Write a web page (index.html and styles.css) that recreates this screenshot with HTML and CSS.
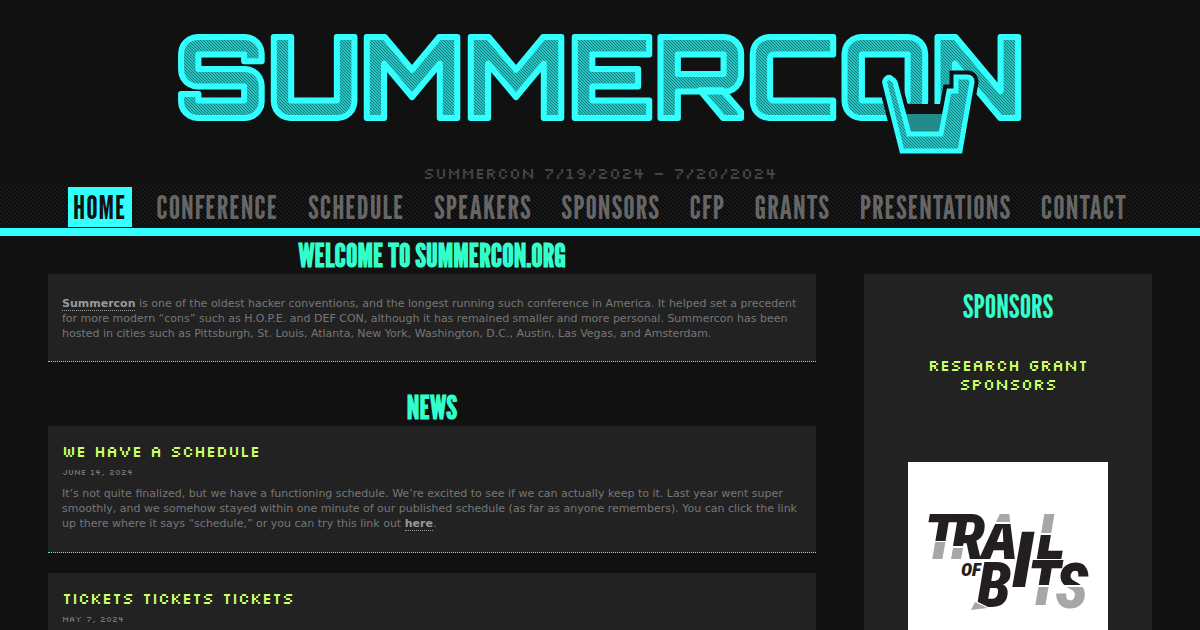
FILE: index.html
```html
<!DOCTYPE html>
<html lang="en">
<head>
<meta charset="utf-8">
<title>Summercon</title>
<link rel="stylesheet" href="styles.css">
</head>
<body>
<header class="masthead">
  <svg class="logo" viewBox="0 0 850 165" role="img" aria-label="Summercon">
    <defs>
      <pattern id="hatch" width="3" height="3" patternUnits="userSpaceOnUse">
        <rect width="3" height="3" fill="#27c3c3"/>
        <path d="M0 0L3 3M-1 2L1 4M2 -1L4 1" stroke="#167c7c" stroke-width="1"/>
      </pattern>
    </defs>
    <text class="wordmark" x="0" y="118">SUMMERCON</text>
    <path class="glass-edge" d="M717 79Q714 76 711 79Q709 81 710 84L727 151H785L797 82Q797 77 792 77H781V91H774L766 134H734L720 82Q719 80 717 79Z"/>
    <path d="M729 104H771L766 134H734Z" fill="#111"/>
    <path d="M729 114H770L766 134H734Z" fill="#228b8b"/>
    <path class="glass" d="M717 79Q714 76 711 79Q709 81 710 84L727 151H785L797 82Q797 77 792 77H781V91H774L766 134H734L720 82Q719 80 717 79Z"/>
  </svg>
  <p class="dates">SUMMERCON 7/19/2024 – 7/20/2024</p>
  <nav class="nav">
    <a class="nav-link active" href="#">HOME</a>
    <a class="nav-link" href="#">CONFERENCE</a>
    <a class="nav-link" href="#">SCHEDULE</a>
    <a class="nav-link" href="#">SPEAKERS</a>
    <a class="nav-link" href="#">SPONSORS</a>
    <a class="nav-link" href="#">CFP</a>
    <a class="nav-link" href="#">GRANTS</a>
    <a class="nav-link" href="#">PRESENTATIONS</a>
    <a class="nav-link" href="#">CONTACT</a>
  </nav>
</header>
<div class="page">
  <main class="content">
    <h1 class="section-title">WELCOME TO SUMMERCON.ORG</h1>
    <section class="card intro">
      <p class="copy"><a href="#">Summercon</a> is one of the oldest hacker conventions, and the longest running such conference in America. It helped set a precedent for more modern “cons” such as H.O.P.E. and DEF CON, although it has remained smaller and more personal. Summercon has been hosted in cities such as Pittsburgh, St. Louis, Atlanta, New York, Washington, D.C., Austin, Las Vegas, and Amsterdam.</p>
    </section>
    <h1 class="section-title">NEWS</h1>
    <article class="card">
      <h2 class="post-title">WE HAVE A SCHEDULE</h2>
      <p class="post-date">JUNE 14, 2024</p>
      <p class="copy">It’s not quite finalized, but we have a functioning schedule. We’re excited to see if we can actually keep to it. Last year went super smoothly, and we somehow stayed within one minute of our published schedule (as far as anyone remembers). You can click the link up there where it says “schedule,” or you can try this link out <a href="#">here</a>.</p>
    </article>
    <article class="card">
      <h2 class="post-title">TICKETS TICKETS TICKETS</h2>
      <p class="post-date">MAY 7, 2024</p>
    </article>
  </main>
  <aside class="sidebar">
    <h1 class="sidebar-title">SPONSORS</h1>
    <h2 class="sponsor-level">RESEARCH GRANT SPONSORS</h2>
    <a class="sponsor" href="#" aria-label="Trail of Bits">
      <svg class="sponsor-logo" viewBox="0 0 200 200">
        <defs>
          <linearGradient id="cut-top" gradientUnits="userSpaceOnUse" x1="0" y1="50" x2="0" y2="100">
            <stop offset="0.57" stop-color="#231f20"/><stop offset="0.57" stop-color="#fff"/>
            <stop offset="0.6" stop-color="#fff"/><stop offset="0.6" stop-color="#a7a7a9"/>
          </linearGradient>
          <linearGradient id="cut-bottom" gradientUnits="userSpaceOnUse" x1="0" y1="100" x2="0" y2="150">
            <stop offset="0.46" stop-color="#231f20"/><stop offset="0.46" stop-color="#fff"/>
            <stop offset="0.5" stop-color="#fff"/><stop offset="0.5" stop-color="#a7a7a9"/>
          </linearGradient>
          <linearGradient id="tip-a" gradientUnits="userSpaceOnUse" x1="0" y1="50" x2="0" y2="100">
            <stop offset="0.2" stop-color="#a7a7a9"/><stop offset="0.2" stop-color="#fff"/>
            <stop offset="0.23" stop-color="#fff"/><stop offset="0.23" stop-color="#231f20"/>
          </linearGradient>
          <linearGradient id="tip-l" gradientUnits="userSpaceOnUse" x1="0" y1="50" x2="0" y2="100">
            <stop offset="0.42" stop-color="#a7a7a9"/><stop offset="0.42" stop-color="#fff"/>
            <stop offset="0.46" stop-color="#fff"/><stop offset="0.46" stop-color="#231f20"/>
          </linearGradient>
        </defs>
        <g class="trail">
          <text x="16" y="97" fill="url(#cut-top)">T</text>
          <text x="43" y="97">R</text>
          <text x="74" y="97" fill="url(#tip-a)">A</text>
          <text class="tall" x="104" y="125">I</text>
          <text x="129" y="97" fill="url(#tip-l)">L</text>
          <text class="small" x="53" y="114">OF</text>
          <text x="69" y="145">B</text>
          <text x="119" y="143" fill="url(#cut-bottom)">T</text>
          <text x="147" y="146" fill="url(#cut-bottom)">S</text>
          <path d="M43 84H58V98H42Z" fill="#fff"/>
          <path d="M45 86H55L53 97H43Z" fill="#a7a7a9"/>
          <path d="M66 138L82 146V148H64Z" fill="#fff"/>
          <path d="M67 140L79 146L63 148Z" fill="#a7a7a9"/>
        </g>
      </svg>
    </a>
  </aside>
</div>
</body>
</html>
```
FILE: styles.css
```css
* { box-sizing: border-box; }
body {
  margin: 0;
  background: #111;
  color: #777;
  font: 11px/15px "DejaVu Sans", sans-serif;
}
h1, h2, p { margin: 0; }

.masthead {
  display: flex;
  flex-direction: column;
  align-items: center;
  border-bottom: 8px solid #3ff;
}
.logo {
  width: 71%;
  max-width: 850px;
  overflow: visible;
  border-bottom: 1px solid #151515;
}
.wordmark {
  font: 900 112px "Orbitron", "DejaVu Sans", sans-serif;
  fill: url(#hatch);
  stroke: #3ff;
  stroke-width: 6px;
  stroke-linejoin: round;
}
.glass-edge { fill: none; stroke: #111; stroke-width: 13px; }
.glass { fill: url(#hatch); stroke: #3ff; stroke-width: 5px; }
.dates {
  color: #444;
  font: 16px/14px "Silkscreen", "DejaVu Sans", sans-serif;
}
.nav {
  align-self: stretch;
  display: flex;
  justify-content: space-between;
  margin-top: 4px;
  padding: 3px 68px 1px;
  background: linear-gradient(45deg, #1a1a1a 25%, #0b0b0b 25% 50%, #1a1a1a 50% 75%, #0b0b0b 75%) 0 0 / 4px 4px;
}
.nav-link {
  padding: 0 5px;
  color: #666;
  font: 32px/40px "League Gothic", "Roboto Condensed", sans-serif;
  letter-spacing: 1px;
  text-decoration: none;
}
.nav-link.active { background: #3ff; color: #111; }

.page {
  display: grid;
  grid-template-columns: 8fr 3fr;
  align-items: start;
  gap: 48px;
  padding: 0 48px;
}
.section-title, .sidebar-title {
  color: #3fc;
  font: bold 32px/38px "League Gothic", "Roboto Condensed", sans-serif;
  text-align: center;
}
.sidebar-title { font-weight: normal; }
.card {
  margin-bottom: 20px;
  padding: 16px 14px 21px;
  background: #222;
  border-bottom: 1px dotted #3fc;
}
.intro { margin-bottom: 26px; padding: 22px 14px 20px; }
.copy a {
  color: #999;
  font-weight: bold;
  text-decoration: none;
  border-bottom: 1px dotted #999;
}
.post-title, .sponsor-level {
  color: #cf6;
  font: 16px/19px "Silkscreen", "DejaVu Sans", sans-serif;
}
.post-date {
  margin: 4px 0 6px;
  color: #777;
  font: 8px/15px "Silkscreen", "DejaVu Sans", sans-serif;
}
.sidebar {
  margin-top: 38px;
  padding: 13px 44px 40px;
  background: #222;
  text-align: center;
}
.sponsor-level { margin: 31px 0 68px; }
.sponsor { display: block; background: #fff; }
.sponsor-logo { display: block; width: 100%; }
.trail {
  fill: #231f20;
  font: italic 900 62px "Roboto Condensed", "Oswald", "Liberation Sans", sans-serif;
}
.trail .tall { font-size: 78px; }
.trail .small { font-size: 19px; }
```
